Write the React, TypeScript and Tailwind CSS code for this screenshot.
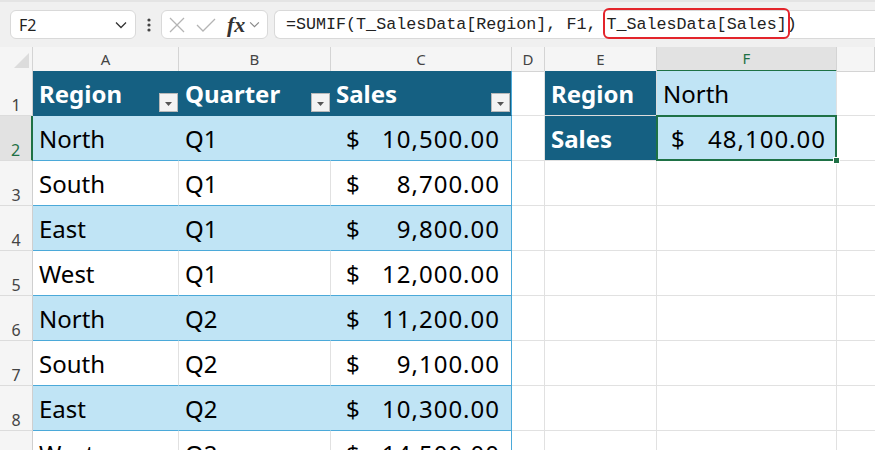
import React from "react";

const GRID = "grid grid-cols-[33px_146px_152px_181px_33px_112px_180px_1fr]";
const SANS = "font-['Noto_Sans',_sans-serif]";

type Row = { region: string; quarter: string; sales: string };

const ROWS: Row[] = [
  { region: "North", quarter: "Q1", sales: "10,500.00" },
  { region: "South", quarter: "Q1", sales: "8,700.00" },
  { region: "East", quarter: "Q1", sales: "9,800.00" },
  { region: "West", quarter: "Q1", sales: "12,000.00" },
  { region: "North", quarter: "Q2", sales: "11,200.00" },
  { region: "South", quarter: "Q2", sales: "9,100.00" },
  { region: "East", quarter: "Q2", sales: "10,300.00" },
  { region: "West", quarter: "Q2", sales: "14,500.00" },
];

function Chevron({ className }: { className?: string }) {
  return (
    <svg viewBox="0 0 12 8" className={className} fill="none" stroke="currentColor" strokeWidth="1.3">
      <path d="M1 1.5l5 5 5-5" />
    </svg>
  );
}

function FilterButton() {
  return (
    <span className="-mb-[6px] mr-[1px] flex h-[19px] w-[19px] shrink-0 items-center justify-center border border-[#b9b9b9] bg-[#f3f3f3]">
      <svg viewBox="0 0 7 4" className="mt-[2px] h-[4px] w-[7px]">
        <path d="M0 0h7L3.5 4z" fill="#555" />
      </svg>
    </span>
  );
}

function Toolbar() {
  return (
    <div className="flex h-[47px] items-center border-t-2 border-[#e4e4e4] bg-[#f0f0f0] pl-[10px]">
      <div className="flex h-[29px] w-[126px] items-center justify-between rounded-[6px] border border-[#d9d9d9] bg-white pl-[8px] pr-[8px]">
        <span className={`${SANS} text-[16px] text-[#222]`}>F2</span>
        <Chevron className="h-[8px] w-[12px] text-[#333]" />
      </div>
      <svg viewBox="0 0 4 14" className="ml-[11px] h-[14px] w-[4px]">
        <circle cx="2" cy="2" r="1.6" fill="#444" />
        <circle cx="2" cy="7" r="1.6" fill="#444" />
        <circle cx="2" cy="12" r="1.6" fill="#444" />
      </svg>
      <div className="ml-[10px] flex h-[29px] w-[107px] items-center rounded-[6px] border border-[#d9d9d9] bg-white pl-[7px]">
        <svg viewBox="0 0 16 16" className="h-[16px] w-[16px]" fill="none" stroke="#b4b4b4" strokeWidth="1.3">
          <path d="M1 1l14 14M15 1L1 15" />
        </svg>
        <svg viewBox="0 0 20 14" className="ml-[11px] h-[14px] w-[20px]" fill="none" stroke="#b4b4b4" strokeWidth="1.3">
          <path d="M1 7l6 6L19 1" />
        </svg>
        <span className="ml-[11px] font-['Liberation_Serif',_serif] text-[22px] font-semibold italic leading-none text-[#333]">fx</span>
        <Chevron className="ml-[4px] h-[7px] w-[11px] text-[#888]" />
      </div>
      <div className="ml-[6px] flex h-[29px] flex-1 items-center rounded-l-[6px] border border-r-0 border-[#d9d9d9] bg-white pl-[11px]">
        <span className="whitespace-pre font-['Liberation_Mono',_monospace] text-[16.7px] text-[#222]">
          =SUMIF(T_SalesData[Region], F1,{" "}
          <span className="relative">
            T_SalesData[Sales]
            <span className="absolute -bottom-[5px] -left-[3px] -right-[3px] -top-[7px] rounded-[6px] border-2 border-[#e3242b]" />
          </span>
          )
        </span>
      </div>
    </div>
  );
}

function ColumnHeaders() {
  const letters = ["A", "B", "C", "D", "E", "F", ""];
  return (
    <div className={`${GRID} h-[24px] bg-[#f5f5f5]`}>
      <div className="flex items-end justify-end border-b border-r border-[#d4d4d4] pb-[3px] pr-[3px]">
        <svg viewBox="0 0 15 15" className="h-[15px] w-[15px]">
          <path d="M15 0v15H0z" fill="#dcdcdc" />
        </svg>
      </div>
      {letters.map((l, i) => (
        <div
          key={i}
          className={`${SANS} flex items-center justify-center border-r text-[15px] ${
            l === "F"
              ? "border-b-2 border-r-[#d4d4d4] border-b-[#1e7145] bg-[#e2e2e2] text-[#1e7145]"
              : "border-b border-[#d4d4d4] text-[#444]"
          }`}
        >
          {l}
        </div>
      ))}
    </div>
  );
}

function RowHeader({ n, selected }: { n: number; selected?: boolean }) {
  return (
    <div
      className={`${SANS} flex items-end justify-center border-b border-[#dcdcdc] pb-[1px] text-[16px] leading-[18px] ${
        selected
          ? "border-r-2 border-r-[#1e7145] bg-[#e2e2e2] text-[#1e7145]"
          : "border-r border-r-[#cfcfcf] bg-[#f5f5f5] text-[#444]"
      }`}
    >
      {n}
    </div>
  );
}

const CELL = `${SANS} flex items-end pb-[9px] text-[24px] leading-[24px]`;

function Money({ value, className }: { value: string; className?: string }) {
  return (
    <div className={`${CELL} justify-between ${className ?? ""}`}>
      <span>$</span>
      <span className="tracking-[1px]">{value}</span>
    </div>
  );
}

export default function App() {
  return (
    <div className="h-[450px] w-[875px] overflow-hidden bg-white text-black">
      <Toolbar />
      <ColumnHeaders />

      {/* row 1: table header + lookup label */}
      <div className={`${GRID} h-[45px]`}>
        <RowHeader n={1} />
        <div className={`${CELL} justify-between border-b border-[#156082] bg-[#156082] pl-[6px] font-bold text-white`}>
          <span>Region</span>
          <FilterButton />
        </div>
        <div className={`${CELL} justify-between border-b border-[#156082] bg-[#156082] pl-[6px] font-bold text-white`}>
          <span>Quarter</span>
          <FilterButton />
        </div>
        <div className={`${CELL} justify-between border-b border-r border-[#156082] border-r-[#4ba9d9] bg-[#156082] pl-[5px] font-bold text-white`}>
          <span>Sales</span>
          <FilterButton />
        </div>
        <div className="border-b border-r border-[#e1e1e1]" />
        <div className={`${CELL} border-b border-r border-[#dcdcdc] bg-[#156082] pl-[6px] font-bold text-white`}>Region</div>
        <div className={`${CELL} border-b border-r border-[#e1e1e1] bg-[#c0e4f5] pl-[6px]`}>North</div>
        <div className="border-b border-[#e1e1e1]" />
      </div>

      {ROWS.map((r, i) => {
        const n = i + 2;
        const band = i % 2 === 0;
        const inner = band
          ? "bg-[#c0e4f5] border-b border-r border-b-[#4ba9d9] border-r-[#c0e4f5]"
          : "border-b border-r border-b-[#4ba9d9] border-r-[#e1e1e1]";
        return (
          <div key={n} className={`${GRID} h-[45px]`}>
            <RowHeader n={n} selected={n === 2} />
            <div className={`${CELL} ${inner} pl-[6px]`}>{r.region}</div>
            <div className={`${CELL} ${inner} pl-[6px]`}>{r.quarter}</div>
            <Money
              value={r.sales}
              className={`${band ? "bg-[#c0e4f5]" : ""} border-b border-r border-b-[#4ba9d9] border-r-[#4ba9d9] pl-[15px] pr-[11px]`}
            />
            <div className="border-b border-r border-[#e1e1e1]" />
            {n === 2 ? (
              <>
                <div className={`${CELL} border-b border-r border-[#e1e1e1] bg-[#156082] pl-[6px] font-bold text-white`}>Sales</div>
                <div className="relative border-b border-r border-[#e1e1e1] bg-[#c0e4f5]">
                  <Money value="48,100.00" className="h-full pl-[14px] pr-[10px]" />
                  <span className="absolute -bottom-px -left-px -right-px -top-px border-2 border-[#1e7145]" />
                  <span className="absolute -bottom-[4px] -right-[4px] h-[7px] w-[7px] border border-white bg-[#1e7145]" />
                </div>
              </>
            ) : (
              <>
                <div className="border-b border-r border-[#e1e1e1]" />
                <div className="border-b border-r border-[#e1e1e1]" />
              </>
            )}
            <div className="border-b border-[#e1e1e1]" />
          </div>
        );
      })}
    </div>
  );
}
